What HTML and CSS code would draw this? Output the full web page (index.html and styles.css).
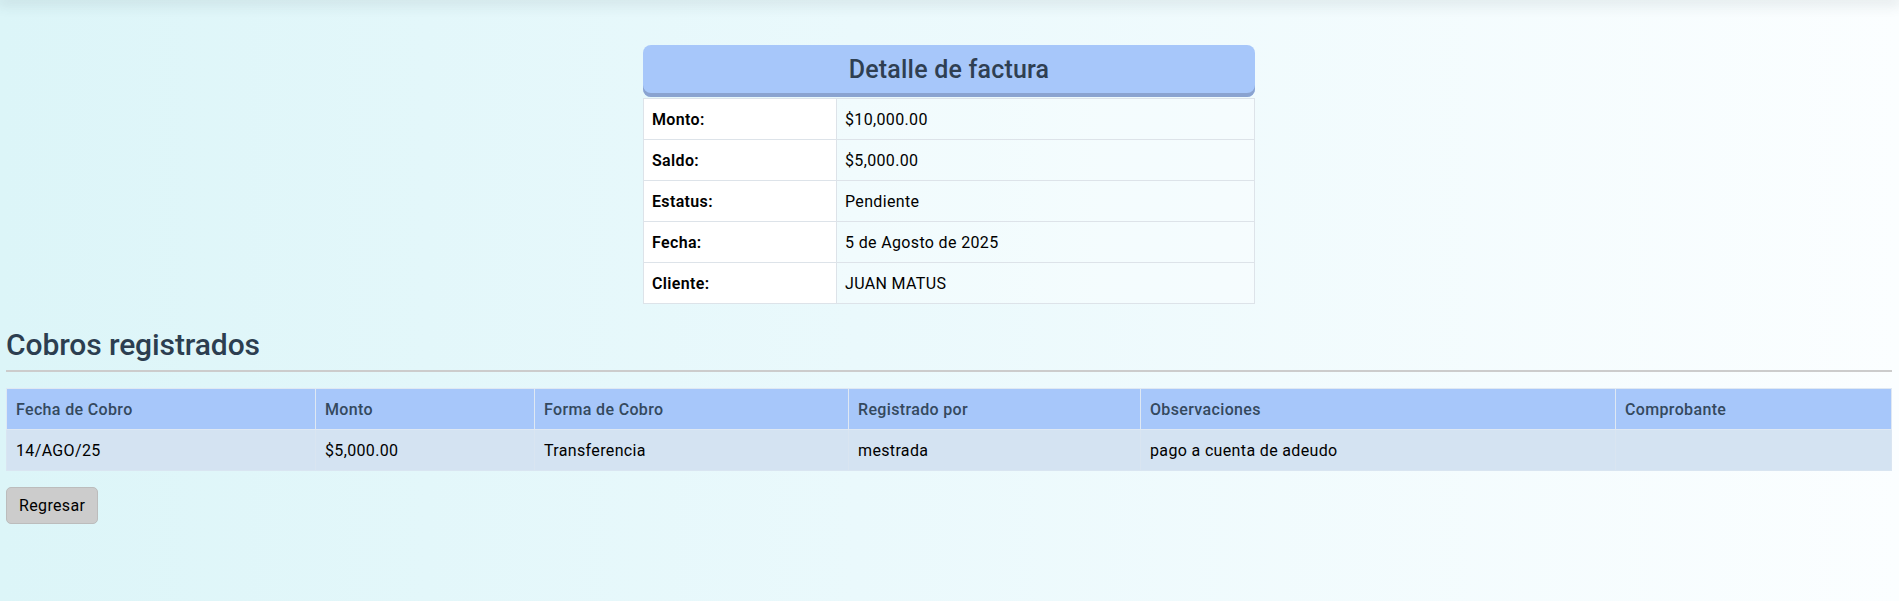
FILE: index.html
```html
<!DOCTYPE html>
<html lang="es">
<head>
<meta charset="utf-8">
<title>Detalle de factura</title>
<link rel="stylesheet" href="styles.css">
</head>
<body>
<div class="topbar"></div>
<main class="page">
  <section class="card">
    <h1 class="card-title">Detalle de factura</h1>
    <table class="detail">
      <tr><th>Monto:</th><td>$10,000.00</td></tr>
      <tr><th>Saldo:</th><td>$5,000.00</td></tr>
      <tr><th>Estatus:</th><td>Pendiente</td></tr>
      <tr><th>Fecha:</th><td>5 de Agosto de 2025</td></tr>
      <tr><th>Cliente:</th><td>JUAN MATUS</td></tr>
    </table>
  </section>

  <h2 class="section-title">Cobros registrados</h2>

  <table class="cobros">
    <colgroup>
      <col class="c1"><col class="c2"><col class="c3"><col class="c4"><col class="c5"><col class="c6">
    </colgroup>
    <thead>
      <tr>
        <th>Fecha de Cobro</th>
        <th>Monto</th>
        <th>Forma de Cobro</th>
        <th>Registrado por</th>
        <th>Observaciones</th>
        <th>Comprobante</th>
      </tr>
    </thead>
    <tbody>
      <tr>
        <td>14/AGO/25</td>
        <td>$5,000.00</td>
        <td>Transferencia</td>
        <td>mestrada</td>
        <td>pago a cuenta de adeudo</td>
        <td></td>
      </tr>
    </tbody>
  </table>

  <button class="btn" type="button">Regresar</button>
</main>
</body>
</html>
```

FILE: styles.css
```css
* { box-sizing: border-box; }

html, body {
  margin: 0;
  min-height: 100%;
}

body {
  font-family: Roboto, "Noto Sans", sans-serif;
  font-size: 16px;
  letter-spacing: 0.35px;
  color: #000;
  background: linear-gradient(to right, #dcf5f8 0%, #eaf9fc 45%, #fbfeff 100%);
  min-height: 601px;
}

.topbar {
  height: 0;
  box-shadow: 0 0 14px 3px rgba(60, 80, 90, 0.22);
}

.page {
  padding: 45px 7px 0 6px;
}

.card {
  width: 612px;
  margin: 0 auto;
}

.card-title {
  margin: 0;
  height: 52px;
  padding-bottom: 4px;
  background: #a7c7fa;
  border-radius: 8px;
  box-shadow: inset 0 -4px 0 #8aa3d0;
  color: #2f3f52;
  font-size: 25px;
  font-weight: 500;
  letter-spacing: 0.2px;
  display: flex;
  align-items: center;
  justify-content: center;
}

.detail {
  width: 612px;
  border-collapse: collapse;
  margin-top: 1px;
}

.detail th,
.detail td {
  height: 41px;
  border: 1px solid #dde3e9;
  padding: 0 8px;
  text-align: left;
  font-size: 16px;
}

.detail th {
  width: 193px;
  background: #fff;
  font-weight: 600;
}

.detail td {
  background: rgba(255, 255, 255, 0.35);
}

.section-title {
  margin: 23px 0 0;
  padding-bottom: 7px;
  border-bottom: 2px solid #cccccc;
  font-size: 30px;
  font-weight: 500;
  letter-spacing: -0.1px;
  color: #2c3e50;
  line-height: 36px;
}

.cobros {
  width: 100%;
  margin-top: 16px;
  border-collapse: collapse;
  table-layout: fixed;
}

.c1 { width: 309px; }
.c2 { width: 219px; }
.c3 { width: 314px; }
.c4 { width: 292px; }
.c5 { width: 475px; }
.c6 { width: auto; }

.cobros th,
.cobros td {
  height: 41px;
  padding: 0 9px;
  text-align: left;
  font-size: 16px;
}

.cobros th {
  background: #a7c7fa;
  color: #34495e;
  font-weight: 500;
  border: 1px solid #dfe8f3;
}

.cobros td {
  background: #d4e3f2;
  border: 1px solid #d9e5f1;
}

.btn {
  margin-top: 16px;
  height: 37px;
  padding: 0 12px;
  background: #cccccc;
  border: 1px solid #bcbcbc;
  border-radius: 5px;
  font-family: inherit;
  font-size: 16px;
  letter-spacing: 0.35px;
  color: #000;
}
```
